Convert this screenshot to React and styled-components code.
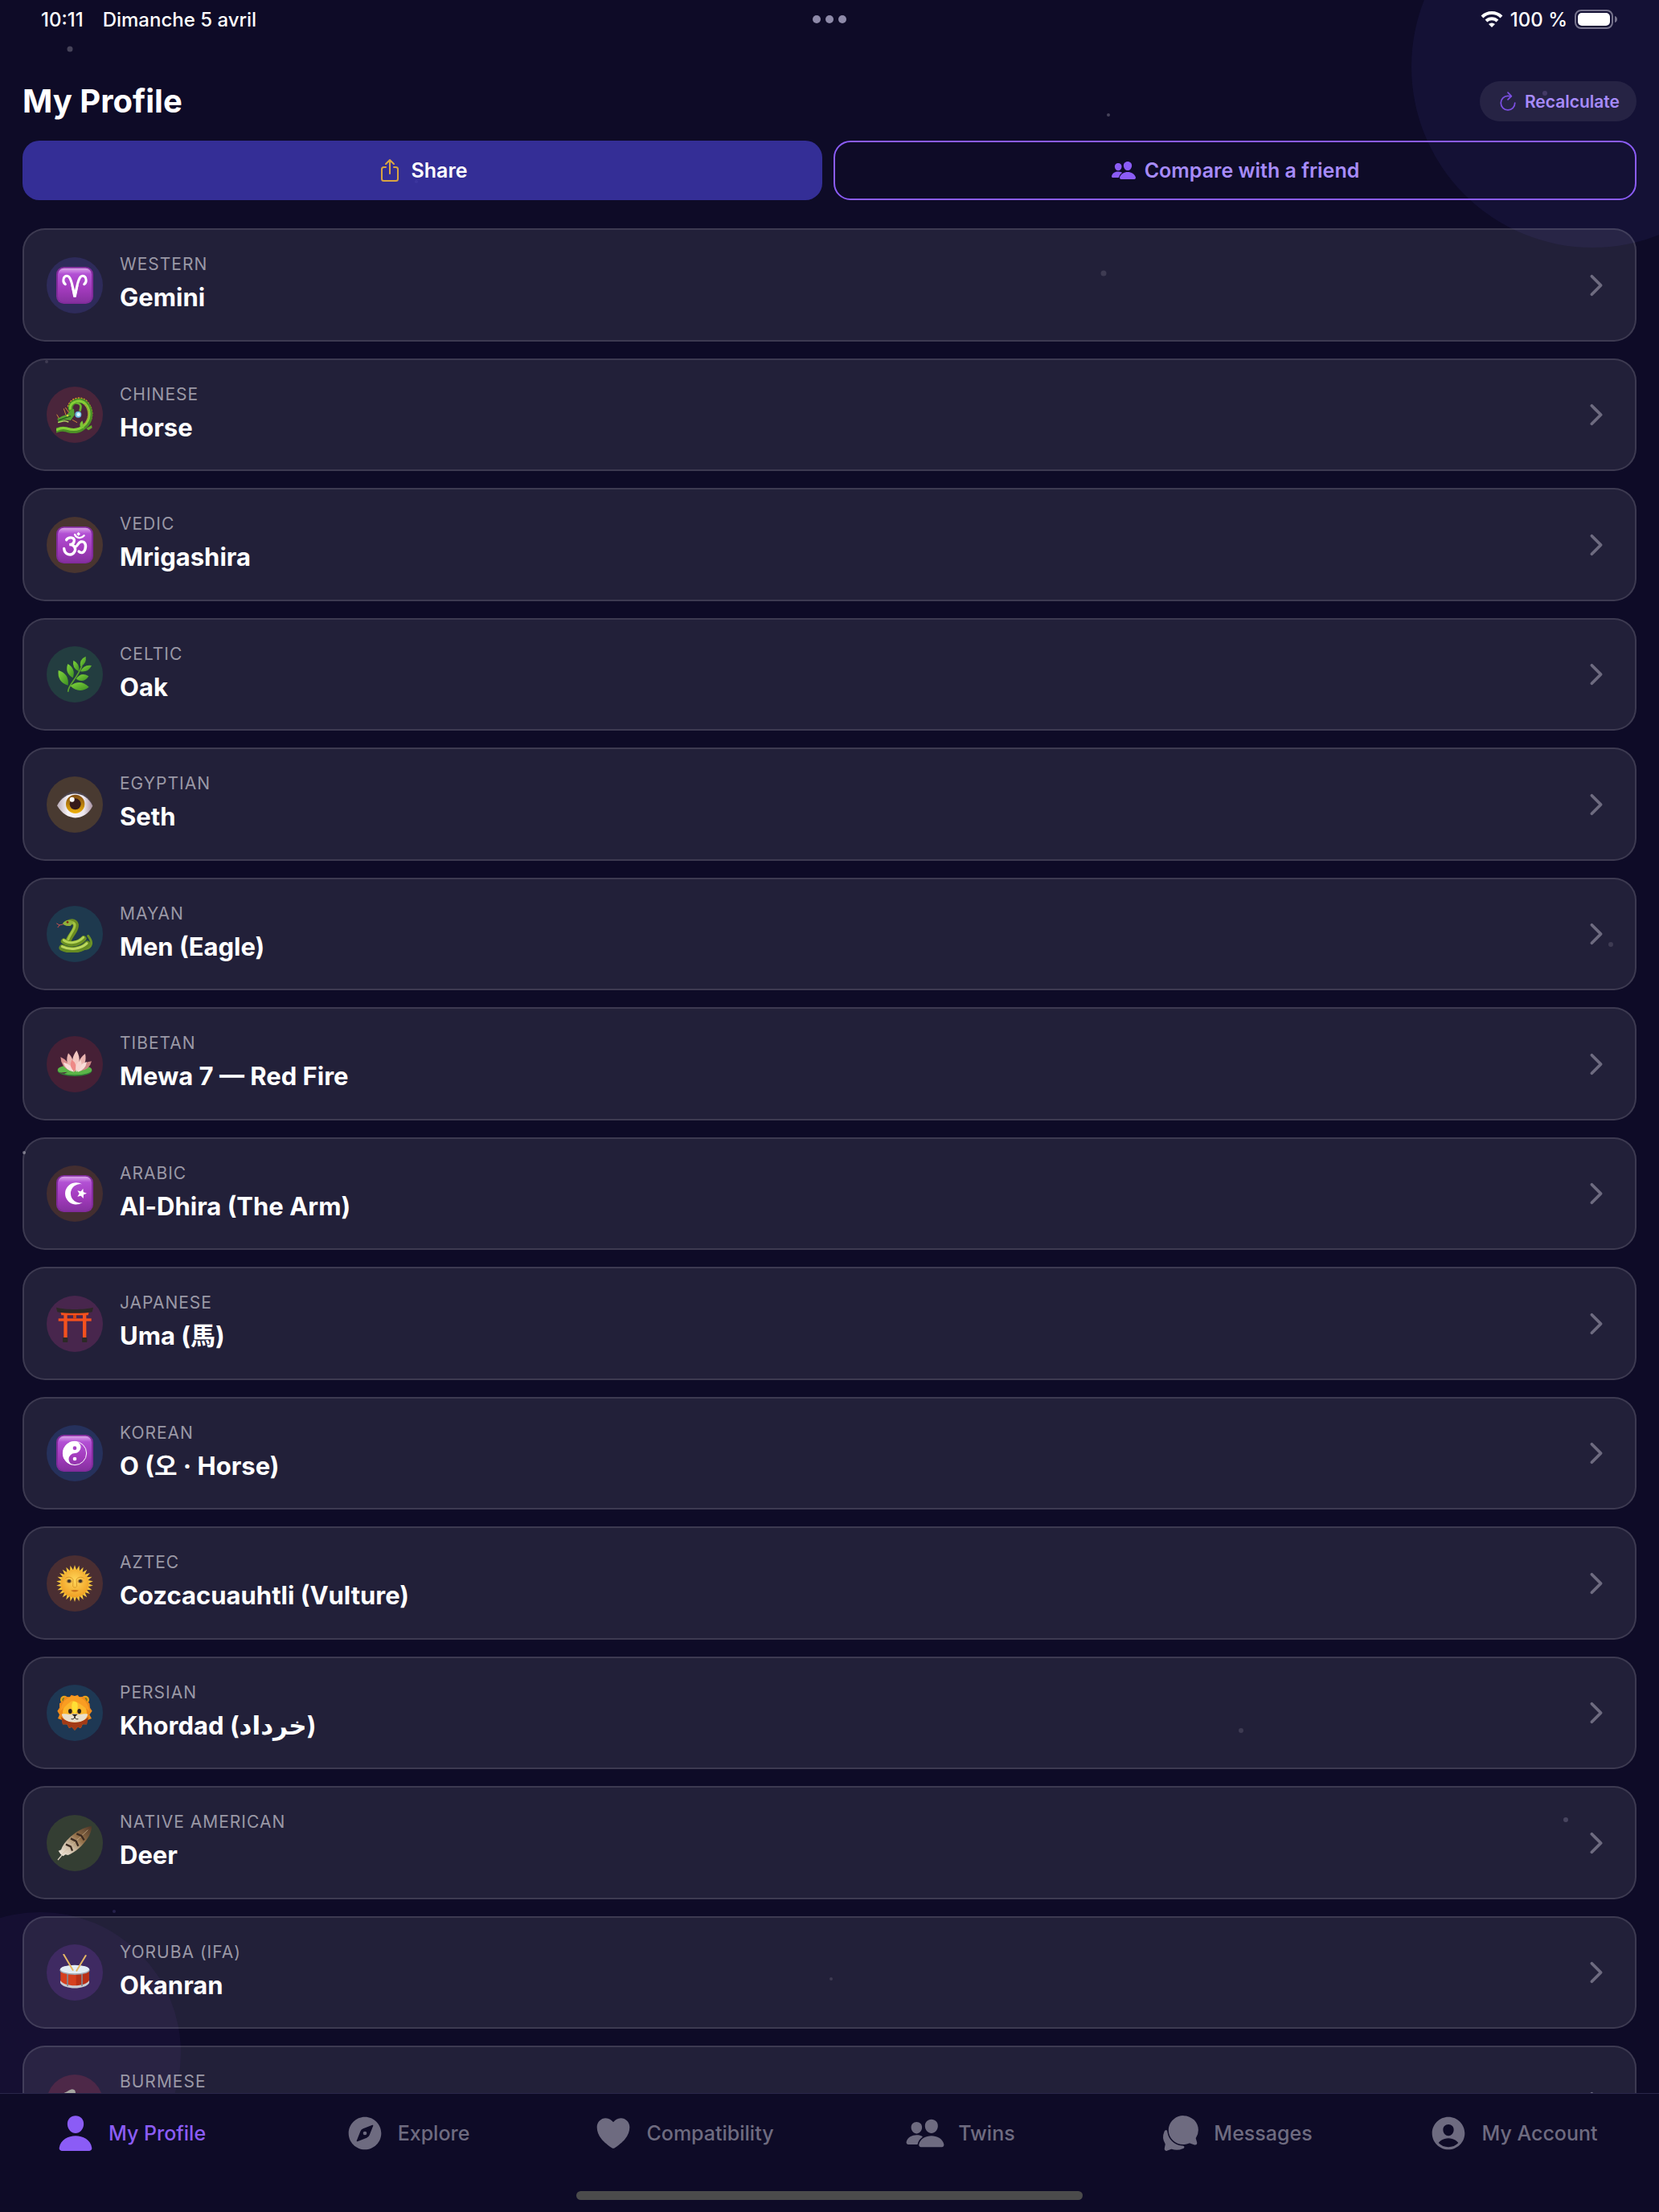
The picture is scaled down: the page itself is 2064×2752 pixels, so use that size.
import React, { useState } from 'react';
import styled, { createGlobalStyle } from 'styled-components';
import {
    IoChatbubbles,
    IoChevronForward,
    IoCompass,
    IoHeart,
    IoPeople,
    IoPerson,
    IoPersonCircle,
    IoRefreshOutline,
    IoShareOutline,
} from 'react-icons/io5';

const GlobalStyle = createGlobalStyle`
    * {
        box-sizing: border-box;
    }

    body {
        margin: 0;
        background-color: #0e0b27;
        color: #fff;
        font-family: Inter, 'Noto Sans CJK JP', 'Noto Sans CJK KR', 'DejaVu Sans', sans-serif;
    }

    button {
        font-family: inherit;
        color: inherit;
        border: none;
        cursor: pointer;
    }
`;

const Screen = styled.div`
    position: relative;
    z-index: 0;
    display: flex;
    flex-direction: column;
    height: 100vh;
    overflow: hidden;
`;

const Sky = styled.div`
    position: absolute;
    inset: 0;
    z-index: -1;
`;

const Orb = styled.span`
    position: absolute;
    left: ${(p) => p.$x}%;
    top: ${(p) => p.$y}%;
    width: ${(p) => p.$size}px;
    height: ${(p) => p.$size}px;
    border-radius: 50%;
    background-color: ${(p) => p.$color};
    transform: translate(-50%, -50%);
`;

const StatusBar = styled.div`
    display: grid;
    grid-template-columns: 1fr auto 1fr;
    align-items: center;
    height: 48px;
    padding: 0 51px;
    font-size: 24px;
    font-weight: 500;
`;

const StatusGroup = styled.div`
    display: flex;
    align-items: center;
    justify-content: ${(p) => (p.$end ? 'flex-end' : 'flex-start')};
    gap: ${(p) => (p.$end ? 9 : 24)}px;
`;

const Dots = styled.div`
    display: flex;
    gap: 6px;
`;

const Dot = styled.span`
    width: 10px;
    height: 10px;
    border-radius: 50%;
    background-color: #8e8aa9;
`;

const Main = styled.main`
    flex: 1;
    min-height: 0;
    display: flex;
    flex-direction: column;
    padding: 53px 28px 0;
`;

const Header = styled.header`
    display: flex;
    align-items: center;
    justify-content: space-between;
    margin-bottom: 24px;
`;

const Title = styled.h1`
    margin: 0;
    font-size: 40px;
    line-height: 50px;
    font-weight: 700;
`;

const Recalculate = styled.button`
    display: flex;
    align-items: center;
    gap: 7px;
    height: 50px;
    padding: 0 21px;
    border-radius: 25px;
    background-color: rgba(255, 255, 255, 0.08);
    color: #a78bfa;
    font-size: 21px;
    font-weight: 600;

    svg {
        color: #7c4fe3;
    }
`;

const Actions = styled.div`
    display: flex;
    gap: 14px;
    margin-bottom: 35px;
`;

const Action = styled.button`
    flex: 1;
    display: flex;
    align-items: center;
    justify-content: center;
    gap: 10px;
    height: 74px;
    padding: 0;
    border-radius: 21px;
    font-size: 25px;
    font-weight: 600;
    background-color: rgba(57, 50, 163, 0.9);

    svg {
        color: #d9a441;
    }
`;

const OutlineAction = styled(Action)`
    border: 2px solid #8b5cf6;
    background-color: transparent;
    color: #a78bfa;

    svg {
        color: #8b5cf6;
    }
`;

const SignList = styled.ul`
    flex: 1;
    min-height: 0;
    display: grid;
    grid-auto-rows: minmax(141px, auto) minmax(140px, auto);
    row-gap: 21px;
    margin: 0;
    padding: 0;
    list-style: none;
    overflow-y: auto;
    scrollbar-width: none;
`;

const SignItem = styled.li`
    display: flex;
`;

const SignCard = styled.button`
    flex: 1;
    display: flex;
    align-items: center;
    gap: 21px;
    padding: 0 28px;
    border: 2px solid rgba(255, 255, 255, 0.12);
    border-radius: 28px;
    background-color: rgba(255, 255, 255, 0.085);
    text-align: left;

    > svg {
        color: #6e6b80;
    }
`;

const Badge = styled.span`
    display: flex;
    align-items: center;
    justify-content: center;
    width: 70px;
    height: 70px;
    border-radius: 50%;
    background-color: ${(p) => p.$color};
`;

const SignText = styled.span`
    flex: 1;
    display: flex;
    flex-direction: column;
    gap: 5px;
`;

const SignLabel = styled.span`
    font-size: 21px;
    line-height: 26px;
    letter-spacing: 1px;
    text-transform: uppercase;
    color: #9a98a6;
`;

const SignName = styled.span`
    min-height: 46px;
    font-size: 31px;
    line-height: 46px;
    font-weight: 700;
`;

const TabBar = styled.nav`
    border-top: 1px solid #29264a;
    background-color: #0e0b27;
`;

const Tabs = styled.div`
    display: grid;
    grid-template-columns: repeat(6, 1fr);
`;

const Tab = styled.a`
    display: flex;
    align-items: center;
    justify-content: center;
    gap: 16px;
    height: 98px;
    padding-right: 19px;
    color: ${(p) => (p.$active ? '#8b5cf6' : '#6e6b80')};
    font-size: 25px;
    font-weight: 500;
    text-decoration: none;
`;

const HomeIndicator = styled.div`
    width: 630px;
    height: 11px;
    margin: 23px auto 15px;
    border-radius: 6px;
    background-color: #4b4b4b;
`;

const Art = ({ children }) => (
    <svg width="46" height="46" viewBox="0 0 138 138" aria-hidden="true">
        {children}
    </svg>
);

const Tile = ({ id, children }) => (
    <Art>
        <defs>
            <linearGradient id={id} x1="0" y1="0" x2="0" y2="1">
                <stop offset="0" stopColor="#dca5ea" />
                <stop offset="0.17" stopColor="#b250d4" />
                <stop offset="0.6" stopColor="#a33bbd" />
                <stop offset="1" stopColor="#8631a0" />
            </linearGradient>
        </defs>
        <rect x="0" y="0" width="138" height="138" rx="28" fill="#812b9c" />
        <rect x="6" y="5" width="126" height="128" rx="23" fill={`url(#${id})`} />
        {children}
    </Art>
);

const Aries = () => (
    <Tile id="tile-aries">
        <path
            d="M34 65 C22 58 25 34 40 34 C56 34 60 72 69 108 C78 72 82 34 98 34 C113 34 116 58 104 65"
            fill="none"
            stroke="#fff"
            strokeWidth="9"
            strokeLinecap="round"
            strokeLinejoin="round"
        />
        <path d="M54 64 L64 113 H74 L84 64 L69 98 Z" fill="#fff" />
    </Tile>
);

const Om = () => (
    <Tile id="tile-om">
        <g fill="none" stroke="#fff" strokeWidth="10" strokeLinecap="round">
            <path d="M38 50 C44 39 68 38 67 53 C66 65 56 68 49 68 C67 66 76 82 67 96 C56 112 31 106 29 82" />
            <path d="M66 74 C80 82 78 60 92 57 C106 54 113 68 108 84 C104 98 93 102 84 93" />
            <path d="M69 30 C76 45 94 46 104 34" strokeWidth="7" />
        </g>
        <path d="M83 21 L90 28 L83 35 L76 28 Z" fill="#fff" />
    </Tile>
);

const Crescent = () => (
    <Tile id="tile-crescent">
        <path d="M96 34 A41 41 0 1 0 98 102 A35 35 0 1 1 96 34 Z" fill="#fff" />
        <path d="M100 50 L101 63 L114 68 L102 73 L101 87 L92 77 L79 80 L86 69 L79 58 L92 61 Z" fill="#fff" />
    </Tile>
);

const YinYang = () => (
    <Tile id="tile-yin">
        <circle cx="69" cy="69" r="44" fill="none" stroke="#fff" strokeWidth="3" />
        <path d="M69 24 A45 45 0 0 0 69 114 A22 22 0 0 1 69 69 A22 22 0 0 0 69 24 Z" fill="#fff" />
        <circle cx="69" cy="50" r="7" fill="#a743c6" />
        <circle cx="69" cy="90" r="7" fill="#fff" />
    </Tile>
);

const Dragon = () => (
    <Art>
        <path
            d="M46 40 C52 6 98 -2 116 24 C138 50 138 88 108 112"
            fill="none"
            stroke="#ee9428"
            strokeWidth="9"
            strokeDasharray="6 4"
        />
        <path
            d="M54 50 C46 22 88 4 110 26 C134 50 132 94 104 114 C84 134 56 132 36 124 C22 119 12 123 2 127"
            fill="none"
            stroke="#4c8f26"
            strokeWidth="18"
            strokeLinecap="round"
        />
        <path
            d="M52 46 C50 22 88 8 108 28 C130 50 128 90 102 110 C84 128 58 126 38 120 C24 116 12 120 3 125"
            fill="none"
            stroke="#86cf38"
            strokeWidth="9"
            strokeLinecap="round"
        />
        <path d="M106 30 C128 54 122 88 100 108" fill="none" stroke="#b48a32" strokeWidth="5" strokeDasharray="4 3" />
        <path d="M92 118 C84 106 90 98 97 91 C102 104 100 110 104 120 Z" fill="#7cc535" />
        <path d="M112 120 L132 108 L134 118 L120 127 Z" fill="#67ad2b" />
        <path d="M4 84 L22 74 L40 68 L54 52 L66 47 L68 70 L54 90 L32 88 L10 100 Z" fill="#57a332" />
        <path d="M8 90 L36 80 L54 74" fill="none" stroke="#28571f" strokeWidth="4" />
        <path d="M6 98 L32 92 L46 96" fill="none" stroke="#b4d563" strokeWidth="4" />
        <path d="M36 70 L28 46 M48 62 L34 42 M10 82 L2 68 M60 88 L78 98" fill="none" stroke="#d18738" strokeWidth="3" />
        <path d="M72 24 C98 28 92 42 88 56" fill="none" stroke="#69b52f" strokeWidth="8" />
        <circle cx="42" cy="72" r="4" fill="#f1d23c" />
        <circle cx="82" cy="68" r="12" fill="#69b8dd" />
        <circle cx="83" cy="68" r="7" fill="#d8f6ff" />
    </Art>
);

// A pointed leaf or petal that runs from its base to its tip.
const Blade = ({ from, to, width, fill }) => {
    const [bx, by] = from;
    const [tx, ty] = to;
    const length = Math.hypot(tx - bx, ty - by);
    const nx = (-(ty - by) / length) * width;
    const ny = ((tx - bx) / length) * width;
    const mx = (bx + tx) / 2;
    const my = (by + ty) / 2;
    return (
        <path
            d={`M${bx} ${by} Q${mx + nx} ${my + ny} ${tx} ${ty} Q${mx - nx} ${my - ny} ${bx} ${by} Z`}
            fill={fill}
        />
    );
};

const leaves = [
    { from: [90, 40], to: [110, 2], width: 17 },
    { from: [90, 58], to: [132, 36], width: 18 },
    { from: [74, 86], to: [121, 76], width: 24 },
    { from: [52, 112], to: [122, 116], width: 30 },
    { from: [84, 58], to: [64, 17], width: 18 },
    { from: [62, 82], to: [43, 30], width: 23 },
    { from: [44, 110], to: [8, 54], width: 28 },
];

const Herb = () => (
    <Art>
        <defs>
            <linearGradient id="leaf" x1="0" y1="0" x2="1" y2="1">
                <stop offset="0" stopColor="#81d63c" />
                <stop offset="1" stopColor="#3d8f22" />
            </linearGradient>
        </defs>
        <path d="M44 134 C44 106 76 90 96 36" fill="none" stroke="#5ba52c" strokeWidth="5" />
        {leaves.map((leaf) => (
            <Blade key={leaf.to.join()} {...leaf} fill="url(#leaf)" />
        ))}
    </Art>
);

const Eye = () => (
    <Art>
        <defs>
            <linearGradient id="eyeball" x1="0" y1="0" x2="1" y2="0">
                <stop offset="0" stopColor="#b9aab5" />
                <stop offset="0.3" stopColor="#f6f3f6" />
                <stop offset="0.75" stopColor="#eee8ee" />
                <stop offset="1" stopColor="#a891a0" />
            </linearGradient>
            <linearGradient id="iris" x1="0" y1="0" x2="0" y2="1">
                <stop offset="0" stopColor="#7d4a12" />
                <stop offset="1" stopColor="#f0b20c" />
            </linearGradient>
        </defs>
        <path d="M4 72 C32 4 106 2 137 72 L130 72 C100 24 40 26 4 72 Z" fill="#4d4650" />
        <path d="M3 73 C34 14 106 14 136 74 C106 132 38 134 3 73 Z" fill="url(#eyeball)" />
        <circle cx="71" cy="67" r="35" fill="url(#iris)" />
        <circle cx="71" cy="67" r="21" fill="#35191a" />
        <circle cx="59" cy="50" r="9" fill="#fff" />
    </Art>
);

const Snake = () => (
    <Art>
        <g fill="none" strokeLinecap="round">
            <path d="M28 32 L12 36 L2 30 M12 36 L6 44" stroke="#c25252" strokeWidth="3" />
            <path d="M88 124 C130 130 142 106 119 76" stroke="#6c9226" strokeWidth="9" />
            <path d="M42 28 C66 16 78 28 71 48 C66 64 50 78 46 92" stroke="#6b8c21" strokeWidth="21" />
            <path d="M40 28 C62 20 74 30 67 46 C60 62 50 74 44 90" stroke="#a3c543" strokeWidth="9" />
            <path d="M22 120 C50 134 94 132 116 106" stroke="#668b22" strokeWidth="23" />
            <path d="M22 116 C50 130 92 126 114 104" stroke="#bdd85e" strokeWidth="9" />
            <path d="M28 96 C48 110 80 110 102 86" stroke="#6b9023" strokeWidth="21" />
            <path d="M28 92 C48 106 80 104 101 82" stroke="#b5d455" strokeWidth="9" />
        </g>
        <path d="M24 30 C30 18 52 14 64 24 L54 38 C42 40 30 38 24 30 Z" fill="#8fb23b" />
        <circle cx="42" cy="25" r="4" fill="#7b2518" />
    </Art>
);

const petals = [
    { from: [52, 94], to: [16, 42], width: 20, fill: '#d98f8f' },
    { from: [90, 94], to: [132, 58], width: 20, fill: '#cf8888' },
    { from: [84, 92], to: [108, 30], width: 22, fill: '#eab4b0' },
    { from: [58, 92], to: [45, 28], width: 22, fill: '#eab4b0' },
    { from: [70, 96], to: [76, 18], width: 26, fill: '#f3c7c2' },
    { from: [66, 98], to: [26, 62], width: 17, fill: '#f8dcd8' },
    { from: [80, 98], to: [114, 60], width: 17, fill: '#f8dcd8' },
    { from: [69, 98], to: [58, 52], width: 19, fill: '#ee8987' },
    { from: [75, 98], to: [92, 54], width: 19, fill: '#f7d4d0' },
];

const Lotus = () => (
    <Art>
        <ellipse cx="69" cy="94" rx="64" ry="20" fill="#2f7d35" />
        <ellipse cx="69" cy="90" rx="64" ry="19" fill="#5bb548" />
        <path d="M6 102 L42 98 L30 104 Z" fill="#472139" />
        {petals.map((petal) => (
            <Blade key={petal.to.join()} {...petal} />
        ))}
    </Art>
);

const Torii = () => (
    <Art>
        <path d="M16 24 H122 L119 37 H19 Z" fill="#f4511e" />
        <path d="M0 8 C34 17 104 17 138 8 L134 25 C102 31 36 31 4 25 Z" fill="#2c2926" />
        <rect x="8" y="49" width="123" height="10" fill="#f4511e" />
        <rect x="63" y="36" width="12" height="14" fill="#d9420f" />
        <rect x="28" y="36" width="13" height="88" fill="#f4511e" />
        <rect x="99" y="36" width="13" height="88" fill="#f4511e" />
        <rect x="24" y="120" width="19" height="18" rx="3" fill="#2c2926" />
        <rect x="96" y="120" width="19" height="18" rx="3" fill="#2c2926" />
    </Art>
);

const rays = Array.from({ length: 26 }, (_, i) => (i * 360) / 26);

const SunFace = () => (
    <Art>
        <defs>
            <radialGradient id="sun" cx="0.5" cy="0.4" r="0.6">
                <stop offset="0" stopColor="#ffd75a" />
                <stop offset="1" stopColor="#f0a024" />
            </radialGradient>
        </defs>
        {rays.map((angle) => (
            <path key={angle} d="M62 22 L69 0 L76 22 Z" fill="#f7c53c" transform={`rotate(${angle} 69 69)`} />
        ))}
        <circle cx="69" cy="69" r="52" fill="url(#sun)" />
        <path
            d="M34 50 C44 42 58 46 63 54 L62 80 C66 86 73 86 77 80 L75 54 C80 46 94 42 104 50"
            fill="none"
            stroke="#dc9a2a"
            strokeWidth="3"
        />
        <ellipse cx="48" cy="61" rx="10" ry="7" fill="#b9863c" />
        <ellipse cx="90" cy="61" rx="10" ry="7" fill="#b9863c" />
        <circle cx="48" cy="60" r="6" fill="#3c332c" />
        <circle cx="90" cy="60" r="6" fill="#3c332c" />
        <path d="M54 95 C62 102 76 102 84 95 C76 92 62 92 54 95 Z" fill="#cb761c" />
    </Art>
);

const Lion = () => (
    <Art>
        <circle cx="30" cy="20" r="15" fill="#e9a51d" />
        <circle cx="108" cy="20" r="15" fill="#e9a51d" />
        <circle cx="30" cy="20" r="8" fill="#7d7a1d" />
        <circle cx="108" cy="20" r="8" fill="#7d7a1d" />
        <path
            d="M69 6 L56 2 L50 10 L32 8 L26 24 L12 34 L12 50 L4 62 L12 76 L6 90 L22 96 L24 112 L40 112 L48 126 L58 122 L69 134 L80 122 L92 126 L98 112 L114 112 L116 96 L132 90 L124 76 L134 62 L126 50 L124 34 L112 24 L104 8 L86 10 L80 2 Z"
            fill="#ef8a1b"
        />
        <path
            d="M18 84 L24 112 L40 112 L48 126 L58 122 L69 134 L80 122 L92 126 L98 112 L114 112 L120 84 C100 108 38 108 18 84 Z"
            fill="#a23a16"
        />
        <path d="M69 22 C44 18 24 44 24 70 C28 98 48 104 69 104 C90 104 110 98 114 70 C114 44 94 18 69 22 Z" fill="#fcb62b" />
        <path d="M69 22 C56 28 52 52 69 76 C86 52 82 28 69 22 Z" fill="#ffdf35" />
        <path d="M20 74 C36 70 52 80 60 72 H78 C86 80 102 70 118 74 C112 96 94 104 69 104 C44 104 26 96 20 74 Z" fill="#e9dfcd" />
        <ellipse cx="52" cy="63" rx="7" ry="9" fill="#2a211d" />
        <ellipse cx="86" cy="63" rx="7" ry="9" fill="#2a211d" />
        <path d="M58 74 H80 L69 84 Z" fill="#2a211d" />
        <path d="M56 92 C64 94 69 90 69 82 C69 90 74 94 82 92" fill="none" stroke="#2a211d" strokeWidth="3" />
        <path d="M69 6 C38 8 20 30 14 62 C30 52 40 34 60 24 C90 30 108 52 124 62 C118 30 100 8 69 6 Z" fill="#f99d22" />
    </Art>
);

const Feather = () => (
    <Art>
        <defs>
            <linearGradient id="feather" x1="0" y1="1" x2="1" y2="0">
                <stop offset="0" stopColor="#f3ece2" />
                <stop offset="0.35" stopColor="#cbb9a0" />
                <stop offset="0.6" stopColor="#94714a" />
                <stop offset="1" stopColor="#4e3626" />
            </linearGradient>
        </defs>
        <path d="M6 132 L26 108" stroke="#d8cdbd" strokeWidth="4" />
        <path d="M16 110 L8 98 L18 94 C30 56 88 10 132 6 C134 46 82 100 44 114 L34 112 L26 118 Z" fill="url(#feather)" />
        <path d="M22 110 L118 20" stroke="#d3bd9c" strokeWidth="2" />
        <path
            d="M36 74 L54 82 L60 98 M54 52 L74 62 L82 80 M76 34 L94 42 L104 58"
            fill="none"
            stroke="#3b2a20"
            strokeWidth="7"
        />
    </Art>
);

const Drum = () => (
    <Art>
        <path d="M16 58 V102 C30 126 108 126 122 102 V58 Z" fill="#d5401f" />
        <path d="M74 118 C98 118 116 110 122 102 V58 H74 Z" fill="#b93017" />
        <path d="M15 98 C28 124 110 124 123 98 V108 C110 134 28 134 15 108 Z" fill="#c8cbd2" />
        <path d="M42 74 V120 M96 74 V120" stroke="#858891" strokeWidth="5" />
        <ellipse cx="69" cy="60" rx="56" ry="18" fill="#9fa6b1" />
        <ellipse cx="69" cy="57" rx="54" ry="16" fill="#e3edf5" />
        <path d="M28 2 L62 60 M110 6 L76 62" stroke="#e6b765" strokeWidth="6" strokeLinecap="round" />
    </Art>
);

const Elephant = () => (
    <Art>
        <path
            d="M20 35 C38 33 46 20 60 19 C72 20 74 30 70 42 C64 52 52 50 50 64 C54 74 66 64 74 58 C96 50 120 60 130 80 V130 H46 V90 C30 76 38 52 44 38 Z"
            fill="#a5a5a0"
        />
    </Art>
);

const Wifi = () => (
    <svg width="28" height="20" viewBox="0 0 28 20" aria-hidden="true">
        <g fill="none" stroke="#fff" strokeWidth="4">
            <path d="M2 7 A17 17 0 0 1 26 7" />
            <path d="M7 12 A10 10 0 0 1 21 12" />
        </g>
        <path d="M14 20 L10 16 A6 6 0 0 1 18 16 Z" fill="#fff" />
    </svg>
);

const Battery = () => (
    <svg width="54" height="24" viewBox="0 0 54 24" aria-hidden="true">
        <rect x="1" y="1" width="46" height="22" rx="7" fill="none" stroke="#77748d" strokeWidth="2" />
        <rect x="4" y="4" width="40" height="16" rx="5" fill="#fff" />
        <path d="M50 8 C54 9 54 15 50 16 Z" fill="#77748d" />
    </svg>
);

const signs = [
    { label: 'Western', name: 'Gemini', color: '#2e2b5a', Icon: Aries },
    { label: 'Chinese', name: 'Horse', color: '#4a253b', Icon: Dragon },
    { label: 'Vedic', name: 'Mrigashira', color: '#493530', Icon: Om },
    { label: 'Celtic', name: 'Oak', color: '#233d40', Icon: Herb },
    { label: 'Egyptian', name: 'Seth', color: '#493a31', Icon: Eye },
    { label: 'Mayan', name: 'Men (Eagle)', color: '#1e394e', Icon: Snake },
    { label: 'Tibetan', name: 'Mewa 7 — Red Fire', color: '#462036', Icon: Lotus },
    { label: 'Arabic', name: 'Al-Dhira (The Arm)', color: '#432e30', Icon: Crescent },
    { label: 'Japanese', name: 'Uma (馬)', color: '#48264d', Icon: Torii },
    { label: 'Korean', name: 'O (오 · Horse)', color: '#26315c', Icon: YinYang },
    { label: 'Aztec', name: 'Cozcacuauhtli (Vulture)', color: '#4a2e32', Icon: SunFace },
    { label: 'Persian', name: 'Khordad (خرداد)', color: '#1e3854', Icon: Lion },
    { label: 'Native American', name: 'Deer', color: '#343e33', Icon: Feather },
    { label: 'Yoruba (Ifa)', name: 'Okanran', color: '#3f2a62', Icon: Drum },
    { label: 'Burmese', name: '', color: '#4d2848', Icon: Elephant },
];

const tabs = [
    { label: 'My Profile', Icon: IoPerson },
    { label: 'Explore', Icon: IoCompass },
    { label: 'Compatibility', Icon: IoHeart },
    { label: 'Twins', Icon: IoPeople },
    { label: 'Messages', Icon: IoChatbubbles },
    { label: 'My Account', Icon: IoPersonCircle },
];

const orbs = [
    { x: 96, y: 3, size: 450, color: 'rgba(99, 102, 241, 0.07)' },
    { x: 2.4, y: 92.8, size: 350, color: 'rgba(139, 92, 246, 0.06)' },
    { x: 4.2, y: 2.2, size: 7, color: '#464359' },
    { x: 66.8, y: 5.2, size: 4, color: '#464359' },
    { x: 66.5, y: 12.35, size: 7, color: '#2c2942' },
    { x: 93.1, y: 4.2, size: 6, color: '#352a5a' },
    { x: 25.1, y: 8.2, size: 4, color: '#55516b' },
    { x: 2.8, y: 16.35, size: 4, color: '#2c2942' },
    { x: 1.45, y: 52.1, size: 4, color: '#6a677b' },
    { x: 97.1, y: 42.7, size: 6, color: '#2c2942' },
    { x: 74.8, y: 78.25, size: 6, color: '#2c2942' },
    { x: 94.4, y: 82.25, size: 6, color: '#373450' },
    { x: 6.9, y: 86.4, size: 4, color: '#25204a' },
    { x: 50.1, y: 89.45, size: 4, color: '#2c2942' },
];

const App = () => {
    const [activeTab, setActiveTab] = useState('My Profile');

    return (
        <Screen>
            <GlobalStyle />
            <Sky>
                {orbs.map((orb) => (
                    <Orb key={`${orb.x}-${orb.y}`} $x={orb.x} $y={orb.y} $size={orb.size} $color={orb.color} />
                ))}
            </Sky>
            <StatusBar>
                <StatusGroup>
                    <span>10:11</span>
                    <span>Dimanche 5 avril</span>
                </StatusGroup>
                <Dots>
                    <Dot />
                    <Dot />
                    <Dot />
                </Dots>
                <StatusGroup $end>
                    <Wifi />
                    <span>100 %</span>
                    <Battery />
                </StatusGroup>
            </StatusBar>
            <Main>
                <Header>
                    <Title>My Profile</Title>
                    <Recalculate type="button">
                        <IoRefreshOutline size={28} />
                        Recalculate
                    </Recalculate>
                </Header>
                <Actions>
                    <Action type="button">
                        <IoShareOutline size={32} />
                        Share
                    </Action>
                    <OutlineAction type="button">
                        <IoPeople size={32} />
                        Compare with a friend
                    </OutlineAction>
                </Actions>
                <SignList>
                    {signs.map(({ label, name, color, Icon }) => (
                        <SignItem key={label}>
                            <SignCard type="button">
                                <Badge $color={color}>
                                    <Icon />
                                </Badge>
                                <SignText>
                                    <SignLabel>{label}</SignLabel>
                                    <SignName>{name}</SignName>
                                </SignText>
                                <IoChevronForward size={40} />
                            </SignCard>
                        </SignItem>
                    ))}
                </SignList>
            </Main>
            <TabBar>
                <Tabs>
                    {tabs.map(({ label, Icon }) => (
                        <Tab
                            key={label}
                            href="#"
                            $active={label === activeTab}
                            onClick={(e) => {
                                e.preventDefault();
                                setActiveTab(label);
                            }}
                        >
                            <Icon size={50} />
                            {label}
                        </Tab>
                    ))}
                </Tabs>
                <HomeIndicator />
            </TabBar>
        </Screen>
    );
};

export default App;
